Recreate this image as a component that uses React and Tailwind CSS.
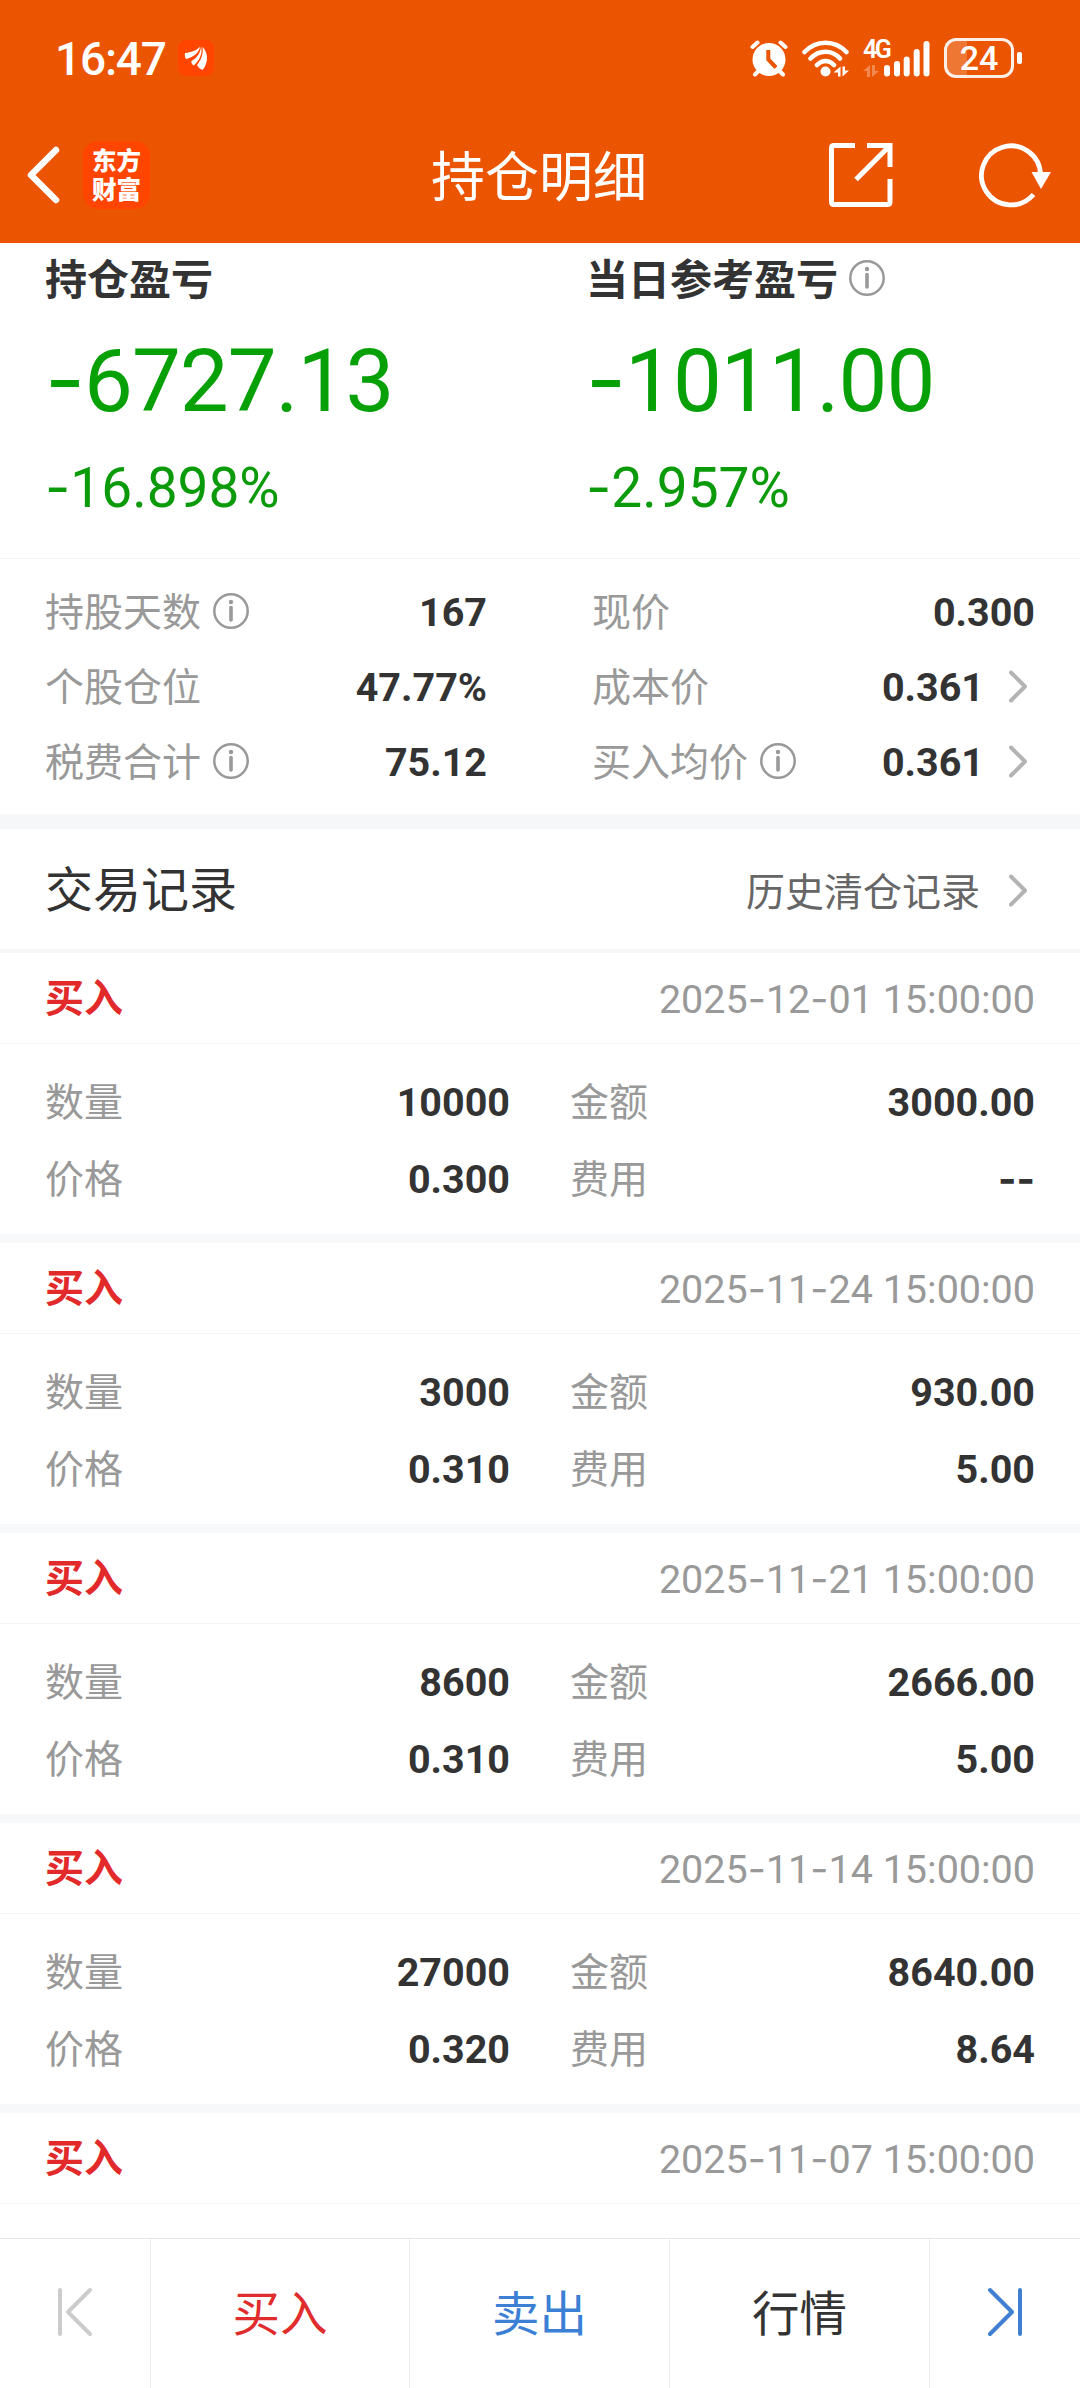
import React from "react";

const summaryRows = [
  [
    { label: "持股天数", value: "167", info: true },
    { label: "现价", value: "0.300" },
  ],
  [
    { label: "个股仓位", value: "47.77%" },
    { label: "成本价", value: "0.361", arrow: true },
  ],
  [
    { label: "税费合计", value: "75.12", info: true },
    { label: "买入均价", value: "0.361", info: true, arrow: true },
  ],
];

const records = [
  { time: "2025-12-01 15:00:00", count: "10000", amount: "3000.00", price: "0.300", fee: "--" },
  { time: "2025-11-24 15:00:00", count: "3000", amount: "930.00", price: "0.310", fee: "5.00" },
  { time: "2025-11-21 15:00:00", count: "8600", amount: "2666.00", price: "0.310", fee: "5.00" },
  { time: "2025-11-14 15:00:00", count: "27000", amount: "8640.00", price: "0.320", fee: "8.64" },
  { time: "2025-11-07 15:00:00" },
];

// Roboto's hyphen is too short for figures, so take that glyph from Inter
const Num = ({ children }) =>
  children.split(/(-+)/).map((part, i) =>
    part.startsWith("-") ? (
      <span key={i} className="font-['Inter']">
        {part}
      </span>
    ) : (
      part
    )
  );

const InfoIcon = () => (
  <svg width="36" height="38" viewBox="0 0 36 38" fill="none" className="shrink-0">
    <circle cx="18" cy="18" r="16.7" stroke="#999" strokeWidth="2.5" />
    <circle cx="18" cy="9" r="2.2" fill="#999" />
    <path d="M18 14.5V27" stroke="#999" strokeWidth="3.6" strokeLinecap="round" />
  </svg>
);

const Chevron = () => (
  <svg width="18" height="34" viewBox="0 0 18 34" fill="none" className="shrink-0">
    <path d="M2 2.5L16 16.5L2 30.5" stroke="#b3b3b3" strokeWidth="4" strokeLinecap="round" strokeLinejoin="round" />
  </svg>
);

const StatusBar = () => (
  <div className="flex h-[106px] items-center pt-[10px] pl-[55px] pr-[58px] text-white">
    <span className="pt-[2px] text-[46px] leading-none font-medium tracking-[-1.2px]">16:47</span>
    <svg width="36" height="36" viewBox="0 0 36 36" className="ml-3">
      <rect width="36" height="36" rx="8" fill="#ff4500" />
      <path
        d="M7 13C13 12.5 18.5 10.5 22 6.500C21.500 12.500 15 17.500 8 19C7 17.500 6.500 15 7 13ZM13.500 21C19 18 22.500 13 23 6.500C25 13 21.500 21 15.500 25.500C14 24.500 13 22.500 13.500 21ZM19 25C23.500 20 25.500 13 24.500 6.800C30.500 13 30.500 23 24.500 30C22 29 20 27 19 25Z"
        fill="#fff"
      />
    </svg>
    <div className="ml-auto flex items-center">
      <svg width="38" height="37" viewBox="0 0 38 37" fill="none" stroke="#fff" strokeLinecap="round">
        <circle cx="19" cy="19.5" r="16.5" fill="#fff" stroke="none" />
        <path d="M2.5 7L7.5 2.5M35.5 7L30.5 2.5M5 34.5L10 29.5M33 34.5L28 29.5" strokeWidth="4" />
        <path d="M18.3 10V19.500L26 27.500" stroke="#eb5502" strokeWidth="4" strokeLinecap="butt" />
      </svg>
      <svg width="47" height="37" viewBox="0 0 47 37" fill="none" stroke="#fff" strokeLinecap="round" className="ml-[14px]">
        <path d="M2.5 12C14 -0.5 33 -0.5 44.5 12M8.5 18.5C17 9.5 30 9.5 38 18.5M15 25C20 19.5 27 19.5 32 25" strokeWidth="4.5" />
        <circle cx="23.5" cy="31.500" r="5" fill="#fff" stroke="none" />
        <path d="M38.500 36.500V26.500L31.500 32.500H36V36.500ZM40.500 26.500V36.500L47 30.500H43V26.500Z" fill="#fff" stroke="none" />
      </svg>
      <div className="ml-[14px] flex h-[37px] items-end">
        <div className="flex h-[37px] w-[21px] flex-col justify-between">
          <span className="font-['Roboto'] text-[25px] leading-[20px] font-semibold tracking-[-2.5px]">4G</span>
          <svg width="16" height="12" viewBox="0 0 16 12" fill="#fff" opacity="0.3">
            <path d="M7 12V0L0 6H4V12ZM9 0V12L16 6H12V0Z" />
          </svg>
        </div>
        <svg width="46" height="37" viewBox="0 0 46 37" stroke="#fff" strokeWidth="6" strokeLinecap="round">
          <path d="M3 28V33.5M13 24V33.5M22.7 19.5V33.5M32.7 12V33.5M42.5 4V33.5" />
        </svg>
      </div>
      <div className="ml-[14px] flex h-10 w-[70px] items-center justify-center rounded-[12px] border-[3px] border-white/90 bg-linear-to-r from-white/20 from-[32%] to-transparent to-[32%]">
        <span className="font-['Roboto'] text-[34px] leading-none font-medium">24</span>
      </div>
      <div className="ml-[3px] h-3 w-[5px] rounded-[2px] bg-white" />
    </div>
  </div>
);

const TitleBar = () => (
  <div className="grid h-[137px] grid-cols-3 items-center pr-[29px] pl-[27px] text-white">
    <div className="flex items-center">
      <svg width="34" height="58" viewBox="0 0 34 58" fill="none">
        <path d="M29 4L4 29L29 54" stroke="#fff" strokeWidth="6.5" strokeLinecap="round" strokeLinejoin="round" />
      </svg>
      <div className="ml-[22px] flex h-[68px] w-[67px] flex-col items-center justify-center rounded-[15px] bg-[#ff4500] pt-[2px] text-[24.5px] leading-[29px] font-black">
        <span>东方</span>
        <span>财富</span>
      </div>
    </div>
    <h1 className="pt-2 text-center text-[54px] leading-none">持仓明细</h1>
    <div className="flex items-center justify-end">
      <svg width="64" height="64" viewBox="0 0 64 64" fill="none" stroke="#fff" strokeWidth="5">
        <path d="M26 2.5H5Q2.5 2.5 2.5 5V59Q2.5 61.5 5 61.5H58.5Q61 61.5 61 59V36M38 2.5H61V24M27 36.5L60 3.5" />
      </svg>
      <svg width="72" height="66" viewBox="0 0 72 66" fill="none" className="ml-[86px]">
        <path d="M61.5 33A29.5 29.5 0 1 0 54.5 52.5" stroke="#fff" strokeWidth="4.8" />
        <path d="M52.5 30H72L62 47Z" fill="#fff" />
      </svg>
    </div>
  </div>
);

const ProfitBlock = ({ title, amount, percent, info }) => (
  <div className="w-[541px] shrink-0">
    <div className="flex h-[72px] items-center gap-[11px]">
      <h2 className="pt-[3px] text-[42px] leading-none font-bold text-[#333]">{title}</h2>
      {info && <InfoIcon />}
    </div>
    <div className="h-[130px] text-[87px] leading-[130px] tracking-[-1px] text-[#07a007]">
      <Num>{amount}</Num>
    </div>
    <div className="text-[55px] leading-[84px] text-[#0a9a0a]">
      <Num>{percent}</Num>
    </div>
  </div>
);

const SummaryCell = ({ label, value, info, arrow }) => (
  <div className="flex h-[75px] items-center">
    <span className="mr-3 pt-1 text-[39px] leading-none text-[#999]">{label}</span>
    {info && <InfoIcon />}
    <span className="ml-auto pt-[3px] text-[39.5px] leading-none font-bold text-[#333]">{value}</span>
    {arrow && (
      <span className="mr-[8px] ml-[25px]">
        <Chevron />
      </span>
    )}
  </div>
);

const Field = ({ label, value }) => (
  <div className="flex h-[77px] items-center justify-between">
    <span className="pt-[3px] text-[39px] leading-none text-[#999]">{label}</span>
    <span className="pt-[2px] text-[39.5px] leading-none font-bold text-[#333]">
      <Num>{value}</Num>
    </span>
  </div>
);

const RecordCard = ({ record }) => (
  <li className="h-[290px] border-b-[9px] border-[#f7f8fa]">
    <div className="flex h-[91px] items-center justify-between border-b border-[#f3f3f3] px-[45px]">
      <span className="pt-[3px] text-[39px] leading-none font-bold text-[#e22a2a]">买入</span>
      <span className="pt-[3px] text-[39.5px] leading-none text-[#999]">
        <Num>{record.time}</Num>
      </span>
    </div>
    {record.count && (
      <div className="grid grid-cols-[465px_465px] gap-x-[60px] px-[45px] pt-[19px]">
        <Field label="数量" value={record.count} />
        <Field label="金额" value={record.amount} />
        <Field label="价格" value={record.price} />
        <Field label="费用" value={record.fee} />
      </div>
    )}
  </li>
);

const BottomBar = () => (
  <nav className="grid h-[150px] shrink-0 grid-cols-[151px_259px_260px_260px_150px] divide-x divide-[#ececec] border-t border-[#e6e6e6] bg-white text-[47.5px] leading-none">
    <button className="flex items-center justify-center pb-[3px]">
      <svg width="36" height="50" viewBox="0 0 36 50" fill="none" stroke="#ccc" strokeWidth="4" strokeLinecap="round" strokeLinejoin="round">
        <path d="M3 3V47M33 3L11 25L33 47" />
      </svg>
    </button>
    <button className="pt-1 text-[#e02c2c]">买入</button>
    <button className="pt-1 text-[#3b80d4]">卖出</button>
    <button className="pt-1 text-[#333]">行情</button>
    <button className="flex items-center justify-center pb-[3px]">
      <svg width="36" height="50" viewBox="0 0 36 50" fill="none" stroke="#3f80d2" strokeWidth="4" strokeLinecap="round" strokeLinejoin="round">
        <path d="M33 3V47M3 3L25 25L3 47" />
      </svg>
    </button>
  </nav>
);

const App = () => {
  return (
    <div className="flex h-[2388px] w-[1080px] flex-col overflow-hidden bg-white font-['Roboto','Noto_Sans_CJK_SC',sans-serif]">
      <header className="h-[243px] shrink-0 bg-[#eb5502]">
        <StatusBar />
        <TitleBar />
      </header>

      <main className="min-h-0 flex-1 overflow-hidden">
        <section className="flex h-[316px] overflow-hidden border-b border-[#f5f5f5] pl-[45px]">
          <ProfitBlock title="持仓盈亏" amount="-6727.13" percent="-16.898%" />
          <ProfitBlock title="当日参考盈亏" amount="-1011.00" percent="-2.957%" info />
        </section>

        <section className="h-[270px] border-b-[15px] border-[#f6f7f9] px-[45px] pt-[15px]">
          {summaryRows.map(([left, right]) => (
            <div key={left.label} className="grid grid-cols-[442px_443px] gap-x-[105px]">
              <SummaryCell {...left} />
              <SummaryCell {...right} />
            </div>
          ))}
        </section>

        <section className="flex h-[124px] items-center justify-between border-b-4 border-[#f6f7f8] pr-[53px] pl-[45px]">
          <h2 className="pt-[3px] text-[48px] leading-none text-[#333]">交易记录</h2>
          <div className="flex items-center gap-[29px] pt-[3px] text-[39px] leading-none text-[#666]">
            <span className="pt-[5px]">历史清仓记录</span>
            <Chevron />
          </div>
        </section>

        <ul>
          {records.map((record) => (
            <RecordCard key={record.time} record={record} />
          ))}
        </ul>
      </main>

      <BottomBar />
    </div>
  );
};

export default App;
